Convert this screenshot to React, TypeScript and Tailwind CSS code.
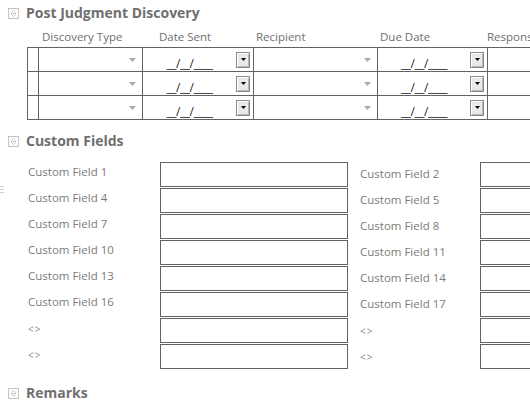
import { FC } from "react";

const SectionIcon: FC = () => (
  <svg width="11" height="11" viewBox="0 0 11 11" className="shrink-0">
    <rect x="0.5" y="0.5" width="10" height="10" fill="#fff" stroke="#c4c4c4" />
    <path d="M3.5 4.5 L5.5 2.5 L7.5 4.5" fill="none" stroke="#c4c4c4" />
    <path d="M3 5.5 H8" stroke="#c4c4c4" />
    <path d="M3.5 6.5 L5.5 8.5 L7.5 6.5" fill="none" stroke="#c4c4c4" />
  </svg>
);

const SectionTitle: FC<{ title: string }> = ({ title }) => (
  <div className="flex items-center h-[20px] pl-[8px] gap-[7px]">
    <SectionIcon />
    <span className="text-[14px] font-bold leading-[20px] text-[#6f6f6f]">{title}</span>
  </div>
);

const DropArrow: FC = () => (
  <svg width="7" height="4" viewBox="0 0 7 4">
    <path d="M0 0 H7 L3.5 4 Z" fill="#a9a9a9" />
  </svg>
);

const DateButton: FC = () => (
  <div className="w-[14px] h-[16px] border border-[#8a8a8a] bg-[#e9e9e9] flex items-center justify-center shadow-[inset_1px_1px_0_#ffffff,inset_-1px_-1px_0_#b5b5b5]">
    <svg width="5" height="3" viewBox="0 0 5 3">
      <path d="M0 0 H5 L2.5 3 Z" fill="#000" />
    </svg>
  </div>
);

const DateCell: FC = () => (
  <div className="flex items-center h-full">
    <div className="flex-1 text-center text-[12px] leading-none pt-[8px] text-[#222] tracking-[-0.5px]">__/__/____</div>
    <div className="pr-[3px]">
      <DateButton />
    </div>
  </div>
);

const ComboCell: FC = () => (
  <div className="flex items-center justify-end h-full pr-[6px]">
    <DropArrow />
  </div>
);

const cols = [11, 104, 111, 124, 110, 120];

const DiscoveryTable: FC = () => (
  <div className="ml-[27px]">
    <div className="flex h-[20px] items-center text-[11.5px] text-[#6e6e6e]">
      <div className="w-[11px]" />
      <div className="w-[104px] pl-[4px]">Discovery Type</div>
      <div className="w-[111px] pl-[17px]">Date Sent</div>
      <div className="w-[124px] pl-[3px]">Recipient</div>
      <div className="w-[110px] pl-[3px]">Due Date</div>
      <div className="w-[120px] pl-[0px] whitespace-nowrap">Response</div>
    </div>
    <table className="border-collapse table-fixed" style={{ width: cols.reduce((a, b) => a + b, 0) }}>
      <colgroup>
        {cols.map((w, i) => (
          <col key={i} style={{ width: w }} />
        ))}
      </colgroup>
      <tbody>
        {[0, 1, 2].map((r) => (
          <tr key={r} className="h-[24px]">
            <td className="border border-[#626262] p-0" />
            <td className="border border-[#626262] p-0"><ComboCell /></td>
            <td className="border border-[#626262] p-0"><DateCell /></td>
            <td className="border border-[#626262] p-0"><ComboCell /></td>
            <td className="border border-[#626262] p-0"><DateCell /></td>
            <td className="border border-[#626262] p-0" />
          </tr>
        ))}
      </tbody>
    </table>
  </div>
);

const rows: [string, string][] = [
  ["Custom Field 1", "Custom Field 2"],
  ["Custom Field 4", "Custom Field 5"],
  ["Custom Field 7", "Custom Field 8"],
  ["Custom Field 10", "Custom Field 11"],
  ["Custom Field 13", "Custom Field 14"],
  ["Custom Field 16", "Custom Field 17"],
  ["<>", "<>"],
  ["<>", "<>"],
];

const Label: FC<{ text: string; shift?: boolean }> = ({ text, shift }) => (
  <div
    className={
      text === "<>"
        ? "text-[10px] text-[#8a8a8a] tracking-[1px] " + (shift ? "pb-[0px]" : "pb-[4px]")
        : "text-[11.5px] text-[#7b7b7b] " + (shift ? "pb-[2px]" : "pb-[6px]")
    }
  >
    {text}
  </div>
);

const CustomFields: FC = () => (
  <div className="relative">
    <div className="absolute left-0 top-[24px] flex flex-col gap-[2px]">
      <div className="w-[4px] h-[1px] bg-[#d0d0d0]" />
      <div className="w-[4px] h-[1px] bg-[#d0d0d0]" />
      <div className="w-[4px] h-[1px] bg-[#d0d0d0]" />
    </div>
    {rows.map(([a, b], i) => (
      <div key={i} className="flex h-[26px]">
        <div className="w-[160px] pl-[28px] flex items-center">
          <Label text={a} />
        </div>
        <div className="w-[188px] h-[25px] border border-[#626262]" />
        <div className="w-[132px] pl-[12px] flex items-center">
          <Label text={b} shift />
        </div>
        <div className="w-[188px] h-[25px] border border-[#626262]" />
      </div>
    ))}
  </div>
);

export default function App() {
  return (
    <div className="w-[530px] h-[400px] overflow-hidden bg-white font-['Open_Sans',sans-serif]">
      <div className="w-[700px] pt-[3px]">
        <SectionTitle title="Post Judgment Discovery" />
        <div className="mt-[4px]">
          <DiscoveryTable />
        </div>
        <div className="mt-[11px]">
          <SectionTitle title="Custom Fields" />
        </div>
        <div className="mt-[11px]">
          <CustomFields />
        </div>
        <div className="mt-[13px]">
          <SectionTitle title="Remarks" />
        </div>
      </div>
    </div>
  );
}
